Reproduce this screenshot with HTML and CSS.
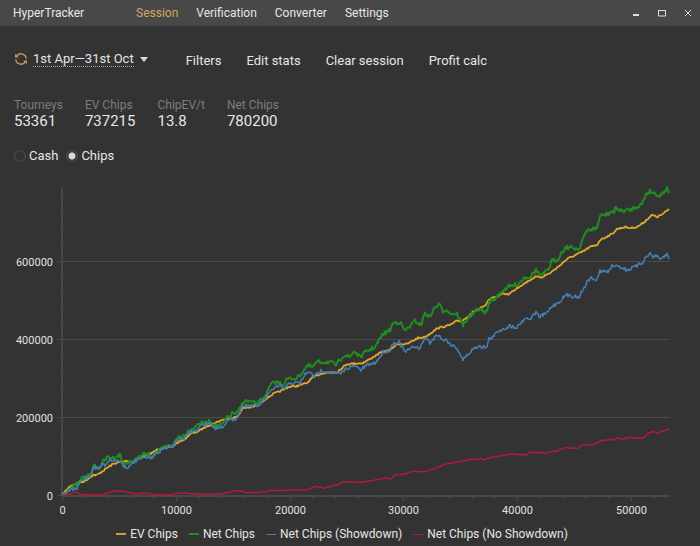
FILE: index.html
```html
<!DOCTYPE html>
<html lang="en">
<head>
    <meta charset="UTF-8">
    <meta name="viewport" content="width=device-width, initial-scale=1.0">
    <title>HyperTracker</title>
    <link rel="stylesheet" href="styles.css">
</head>
<body>
    <!-- Title bar -->
    <header class="titlebar">
        <span class="app-name">HyperTracker</span>
        <nav class="menu">
            <a href="#session" class="active">Session</a>
            <a href="#verification">Verification</a>
            <a href="#converter">Converter</a>
            <a href="#settings">Settings</a>
        </nav>
        <div class="window-btns">
            <button aria-label="Minimize"><svg width="8" height="8" viewBox="0 0 8 8"><path d="M1 6h6" stroke-width="2"/></svg></button>
            <button aria-label="Maximize"><svg width="8" height="8" viewBox="0 0 8 8"><path d="M.5 1v6h7V1M0 1.5h8"/></svg></button>
            <button aria-label="Close"><svg width="8" height="8" viewBox="0 0 8 8"><path d="M1 1l6 6M7 1L1 7"/></svg></button>
        </div>
    </header>

    <main>
        <div class="toolbar">
            <div class="range">
                <button class="refresh" aria-label="Refresh">
                    <svg width="14" height="14" viewBox="0 0 14 14">
                        <path d="M2.5 4.5A5.2 5.2 0 0 1 12.2 6.5M11.5 9.5A5.2 5.2 0 0 1 1.8 7.5"/>
                        <path class="arrow" d="M1 1.8V5.6H4.8zM13 12.2V8.4H9.2z"/>
                    </svg>
                </button>
                <button class="range-btn"><span>1st Apr—31st Oct</span><i class="caret"></i></button>
            </div>
            <div class="actions">
                <button>Filters</button>
                <button>Edit stats</button>
                <button>Clear session</button>
                <button>Profit calc</button>
            </div>
        </div>

        <dl class="stats">
            <div><dt>Tourneys</dt><dd>53361</dd></div>
            <div><dt>EV Chips</dt><dd>737215</dd></div>
            <div><dt>ChipEV/t</dt><dd>13.8</dd></div>
            <div><dt>Net Chips</dt><dd>780200</dd></div>
        </dl>

        <div class="units">
            <label><input type="radio" name="unit">Cash</label>
            <label><input type="radio" name="unit" checked>Chips</label>
        </div>

        <!-- Axes and lines are filled in by chart.js -->
        <svg id="chart" class="chart" viewBox="0 182 700 338" role="img" aria-label="Chips by tournaments played">
            <g id="grid"></g>
            <g id="lines"></g>
        </svg>

        <ul class="legend">
            <li class="ev">EV Chips</li>
            <li class="net">Net Chips</li>
            <li class="showdown">Net Chips (Showdown)</li>
            <li class="no-showdown">Net Chips (No Showdown)</li>
        </ul>
    </main>

    <script src="chart.js"></script>
</body>
</html>
```

FILE: styles.css
```css
body {
    margin: 0;
    background-color: #333333;
    color: #e6e6e6;
    font-family: Roboto, sans-serif;
    font-size: 13px;
}

button {
    background: none;
    border: none;
    padding: 0;
    color: inherit;
    font: inherit;
    cursor: pointer;
}

svg {
    display: block;
}

/* Title bar */
.titlebar {
    display: flex;
    align-items: center;
    height: 26px;
    padding: 0 8px 0 13px;
    background-color: #484848;
    font-size: 12px;
}

.app-name {
    width: 123px;
}

.menu {
    display: flex;
    gap: 18px;
}

.menu a {
    color: inherit;
    text-decoration: none;
}

.menu a.active {
    color: #d2a662;
}

.window-btns {
    display: flex;
    gap: 18px;
    margin-left: auto;
}

.window-btns svg {
    fill: none;
    stroke: #dddddd;
}

/* Toolbar */
.toolbar {
    display: flex;
    align-items: center;
    gap: 38px;
    padding: 23px 14px 0;
    height: 20px;
}

.range {
    display: flex;
    align-items: center;
    gap: 5px;
}

.refresh svg {
    fill: none;
    stroke: #bf9656;
    stroke-width: 1.5;
}

.refresh .arrow {
    fill: #bf9656;
    stroke: none;
}

.range-btn {
    display: flex;
    align-items: center;
    gap: 6px;
}

.range-btn span {
    border-bottom: 1px dotted #aaaaaa;
    line-height: 14px;
}

.caret {
    border: 4px solid transparent;
    border-top: 5px solid #d8d8d8;
    border-bottom: 0;
}

.actions {
    display: flex;
    gap: 25px;
    padding-top: 2px;
}

/* Stats */
.stats {
    display: flex;
    gap: 22px;
    margin: 28px 14px 0;
}

.stats dt {
    color: #7d7d7d;
    font-size: 12px;
    line-height: 16px;
}

.stats dd {
    margin: 0;
    font-size: 15px;
    line-height: 17px;
}

.units {
    display: flex;
    gap: 8px;
    margin: 18px 14px 0;
    line-height: 16px;
}

.units label {
    display: flex;
    align-items: center;
    gap: 3px;
}

.units input {
    appearance: none;
    width: 12px;
    height: 12px;
    margin: 0;
    border: 1px solid #505050;
    border-radius: 50%;
}

.units input:checked {
    background: radial-gradient(circle, #d8d8d8 3px, transparent 4px);
}

/* Chart */
.chart {
    width: 100%;
    margin-top: 18px;
}

.chart text {
    fill: #e0e0e0;
    font-size: 11px;
}

.axis {
    stroke: #484848;
    stroke-width: 2;
}

.tick,
.gridline {
    stroke: #4a4a4a;
}

.line {
    fill: none;
    stroke-width: 1.3;
    stroke-linejoin: round;
}

.line.ev {
    stroke: #e0a82a;
    stroke-width: 1.8;
}

.line.net {
    stroke: #228b22;
    stroke-width: 2;
}

.line.showdown {
    stroke: #4480b6;
    stroke-width: 1.5;
}

.line.no-showdown {
    stroke: #be1739;
}

/* Legend */
.legend {
    display: flex;
    justify-content: center;
    gap: 11px;
    margin: 6px 0 0;
    padding: 0 16px 0 0;
    list-style: none;
    font-size: 12px;
    line-height: 16px;
}

.legend li {
    display: flex;
    align-items: center;
    gap: 4px;
}

.legend li::before {
    content: "";
    width: 10px;
    height: 2px;
}

.legend .ev::before {
    background-color: #d0a02c;
}

.legend .net::before {
    background-color: #228b22;
}

.legend .showdown::before {
    height: 1px;
    background-color: #4480b6;
}

.legend .no-showdown::before {
    height: 1px;
    background-color: #be1739;
}
```

FILE: chart.js
```javascript
const SVG = "http://www.w3.org/2000/svg";
const grid = document.getElementById("grid");
const lines = document.getElementById("lines");

// Plot area, in viewBox units
const left = 62, right = 670, top_ = 187, bottom = 495;
const perThousand = 11.38;   // x step for 1000 tourneys
const perStep = 15.57;       // y step for 40000 chips

function add(parent, tag, attrs, text) {
    const el = document.createElementNS(SVG, tag);
    for (const key in attrs) el.setAttribute(key, attrs[key]);
    if (text !== undefined) el.textContent = text;
    parent.appendChild(el);
}

function line(x1, y1, x2, y2, cls) {
    add(grid, "line", { x1, y1, x2, y2, class: cls });
}

// Horizontal grid lines and y ticks
for (let i = 0; i < 20; i++) {
    const y = Math.round(bottom - i * perStep) + 0.5;
    if (i % 5 === 0) {
        line(left - 5, y, i ? right : left, y, "gridline");
        add(grid, "text", { x: left - 9, y: y + 4, "text-anchor": "end" }, i * 40000);
    } else {
        line(left - 2, y, left, y, "tick");
    }
}

// x ticks every 2000 tourneys, labels every 10000
for (let k = 0; k <= 52; k += 2) {
    const x = Math.round(left + k * perThousand) + 0.5;
    line(x, bottom, x, bottom + (k % 10 ? 4 : 6), "tick");
    if (k % 10 === 0) {
        add(grid, "text", { x, y: 514, "text-anchor": "middle" }, k * 1000);
    }
}

line(left, top_, left, bottom + 1, "axis");
line(left, bottom + 1, right, bottom + 1, "axis");

const series = [
    { name: "ev", noise: 0.8, points: "62,495 70,486 78,483 85,481 93,475 97,475 107,468 113,464 120,462 127,461 132,462 143,456 152,453 158,449 165,448 173,446 177,443 185,439 190,434 197,432 207,426 215,423 222,420 237,417 243,408 253,407 260,403 267,398 273,394 283,390 288,387 297,386 307,383 313,377 323,373 337,372 347,364 363,363 370,359 380,353 390,350 397,344 407,344 418,338 425,337 438,328 450,325 457,321 462,321 473,312 485,306 490,299 502,294 509,294 517,288 525,283 535,277 542,277 550,273 558,267 567,259 582,252 590,247 597,245 600,240 612,234 617,229 625,227 630,228 637,227 643,223 652,215 657,217 663,214 669,209" },
    { name: "net", noise: 2, points: "62,495 72,487 77,485 82,478 90,475 94,466 99,468 103,462 108,457 113,458 120,455 123,463 130,463 137,459 144,454 152,456 160,450 165,447 173,445 178,437 185,435 190,429 195,428 198,423 207,423 210,421 215,426 222,425 227,418 233,413 237,414 240,408 244,401 252,402 257,404 262,399 267,393 271,384 278,382 283,385 287,379 297,378 300,375 307,366 313,367 317,362 330,362 336,365 344,355 350,357 354,351 360,357 367,351 375,347 383,334 390,330 393,323 400,322 405,331 415,321 421,325 425,313 430,317 433,310 439,304 443,311 447,309 449,313 457,314 463,325 468,318 475,312 480,308 483,312 487,312 489,302 497,297 502,291 508,287 518,284 525,277 530,277 536,270 541,276 548,270 552,261 557,260 560,255 566,247 579,249 583,238 588,230 597,228 600,216 608,214 612,211 614,213 616,207 620,211 630,210 642,204 646,194 650,191 660,196 667,188 669,192" },
    { name: "showdown", noise: 1.8, points: "62,495 72,489 77,489 80,482 90,475 94,467 99,469 103,463 105,465 109,460 120,461 125,467 130,467 133,462 143,458 152,457 162,449 173,446 177,440 185,438 190,432 197,431 200,426 210,423 215,428 222,427 227,421 237,418 243,405 258,406 267,397 272,389 280,386 284,389 290,383 300,383 306,373 312,373 314,377 322,370 328,372 340,374 347,368 355,366 361,370 367,365 375,363 380,357 383,352 390,350 393,343 399,342 405,352 415,346 420,349 425,337 430,343 435,337 439,334 442,340 447,340 450,344 457,348 463,360 472,350 480,345 482,347 487,347 489,339 493,337 498,331 510,326 517,327 525,318 530,319 536,312 539,317 547,313 552,306 558,303 566,295 579,297 583,289 590,278 597,280 600,271 608,272 612,266 614,268 616,264 622,268 627,270 637,266 643,262 647,255 651,254 653,258 655,255 660,260 667,254 669,259" },
    { name: "no-showdown", noise: 0.5, points: "62,495 70,494 74,492 80,494 90,495 103,495 107,493 113,491 122,491 130,493 137,494 145,493 155,495 173,495 177,493 183,493 200,494 223,494 233,491 242,491 247,493 265,492 272,490 278,491 290,490 307,490 315,486 323,488 337,485 343,482 363,482 377,480 385,478 391,479 395,475 405,474 415,471 423,472 433,469 443,465 457,462 472,459 477,460 481,458 484,460 493,457 513,454 527,455 530,452 547,453 552,451 557,451 563,448 577,448 583,445 593,445 602,440 613,440 617,438 623,439 630,437 637,438 643,438 647,434 653,431 657,433 663,431 669,429" }
];

// Fixed seed so the lines look the same on every load
let seed = 7;
function random() {
    seed = (seed * 16807) % 2147483647;
    return seed / 2147483647 - 0.5;
}

for (const s of series) {
    const pts = s.points.split(" ").map(p => p.split(",").map(Number));
    let d = "M" + pts[0];
    for (let i = 1; i < pts.length; i++) {
        const [x0, y0] = pts[i - 1];
        const [x1, y1] = pts[i];
        for (let x = x0 + 1; x <= x1; x++) {
            const y = y0 + (y1 - y0) * (x - x0) / (x1 - x0) + random() * 2 * s.noise;
            d += "L" + x + "," + Math.min(y, bottom).toFixed(1);
        }
    }
    add(lines, "path", { d, class: "line " + s.name });
}
```
